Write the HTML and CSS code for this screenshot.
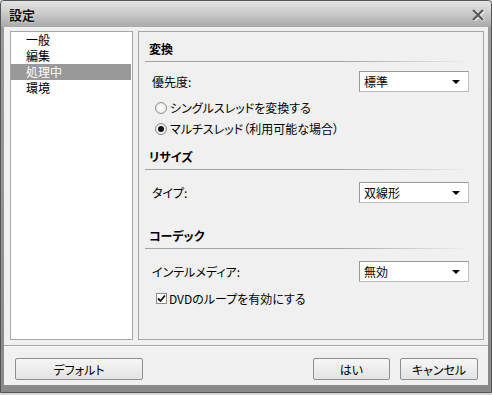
FILE: index.html
```html
<!DOCTYPE html>
<html lang="ja">

<head>
    <meta charset="UTF-8">
    <title>設定</title>
    <link rel="stylesheet" href="styles.css">
</head>

<body>
    <div class="window">
        <div class="titlebar">
            <span class="title">設定</span>
            <svg class="close" width="14" height="12" viewBox="0 0 14 12">
                <path d="M2 1 L12 11 M12 1 L2 11" stroke="#f4f4f4" stroke-width="3.4" transform="translate(0.6,0.6)" />
                <path d="M2 1 L12 11 M12 1 L2 11" stroke="#5c5c5c" stroke-width="2.4" />
            </svg>
        </div>

        <div class="client">
            <div class="main">
                <ul class="nav">
                    <li>一般</li>
                    <li>編集</li>
                    <li class="active">処理中</li>
                    <li>環境</li>
                </ul>

                <div class="panel">
                    <div class="section-head first">変換</div>
                    <div class="row field">
                        <span class="label">優先度:</span>
                        <div class="select"><span>標準</span><i class="arrow"></i></div>
                    </div>
                    <label class="row option first-option">
                        <span class="radio"></span>シングルスレッドを変換する
                    </label>
                    <label class="row option">
                        <span class="radio checked"></span>マルチスレッド（利用可能な場合）
                    </label>

                    <div class="section-head resize">リサイズ</div>
                    <div class="row field after-head">
                        <span class="label">タイプ:</span>
                        <div class="select"><span>双線形</span><i class="arrow"></i></div>
                    </div>

                    <div class="section-head codec">コーデック</div>
                    <div class="row field after-head">
                        <span class="label">インテルメディア:</span>
                        <div class="select"><span>無効</span><i class="arrow"></i></div>
                    </div>
                    <label class="row option check-row">
                        <span class="checkbox">
                            <svg width="9" height="9" viewBox="0 0 9 9">
                                <path d="M1 4.5 L3.5 7 L8 1.5" fill="none" stroke="#111" stroke-width="1.8" />
                            </svg>
                        </span>DVDのループを有効にする
                    </label>
                </div>
            </div>

            <div class="separator"></div>

            <div class="footer">
                <button class="btn default">デフォルト</button>
                <div class="spacer"></div>
                <button class="btn ok">はい</button>
                <button class="btn cancel">キャンセル</button>
            </div>
        </div>
    </div>
</body>

</html>
```

FILE: styles.css
```css
html {
    background-color: #d6d6d6;
}

body {
    margin: 0;
    font-family: "Noto Sans CJK JP", "Liberation Sans", sans-serif;
    font-size: 12px;
    font-feature-settings: "palt";
    color: #000;
}

.window {
    width: 492px;
    height: 393px;
    box-sizing: border-box;
    border: 1px solid #555;
    border-radius: 4px 4px 0 0;
    background: linear-gradient(#9d9d9d, #8a8a8a);
    display: flex;
    flex-direction: column;
}

.titlebar {
    height: 26px;
    flex: none;
    display: flex;
    align-items: center;
    justify-content: space-between;
    padding: 0 6px 0 8px;
    background: linear-gradient(#e4e4e4 0%, #cfcfcf 40%, #a9a9a9 100%);
    border-radius: 3px 3px 0 0;
}

.title {
    font-weight: bold;
    font-size: 13px;
    color: #111;
    text-shadow: 0 0 2px #fff;
}

.close {
    margin-top: 1px;
}

.client {
    flex: 1;
    margin: 0 3px 7px 3px;
    background-color: #f0f0f0;
    padding: 4px 4px 0 6px;
    display: flex;
    flex-direction: column;
}

.main {
    height: 309px;
    display: flex;
    gap: 5px;
}

.nav {
    width: 123px;
    box-sizing: border-box;
    margin: 0;
    padding: 0;
    list-style: none;
    background-color: #fff;
    border: 1px solid #a7a7a7;
}

.nav li {
    height: 16px;
    line-height: 16px;
    padding-left: 15px;
    margin-right: 1px;
}

.nav li.active {
    background-color: #999;
    color: #fff;
}

.panel {
    flex: 1;
    box-sizing: border-box;
    border: 1px solid #a7a7a7;
    padding: 0 14px 0 6px;
    display: flex;
    flex-direction: column;
}

.section-head {
    height: 16px;
    line-height: 16px;
    padding: 0 0 4px 4px;
    font-weight: bold;
    border-bottom: 1px solid transparent;
    border-image: linear-gradient(to right, #a4a4a4 60%, #f0f0f0) 1;
}

.section-head.first {
    margin-top: 9px;
}

.section-head.resize {
    margin-top: 10px;
}

.section-head.codec {
    margin-top: 25px;
}

.row {
    display: flex;
    align-items: center;
}

.field {
    height: 21px;
    justify-content: space-between;
    margin-top: 9px;
    padding-left: 7px;
}

.field.after-head {
    margin-top: 12px;
}

.select {
    width: 110px;
    height: 21px;
    box-sizing: border-box;
    background-color: #fff;
    border: 1px solid #bdbdbd;
    border-top-color: #9a9a9a;
    border-left-color: #9a9a9a;
    display: flex;
    align-items: center;
    justify-content: space-between;
    padding: 0 8px 0 4px;
}

.arrow {
    width: 0;
    height: 0;
    border-left: 4px solid transparent;
    border-right: 4px solid transparent;
    border-top: 4px solid #000;
    margin-top: 1px;
}

.option {
    height: 21px;
    padding-left: 10px;
    gap: 3px;
}

.first-option {
    margin-top: 5px;
}

.radio {
    width: 12px;
    height: 12px;
    box-sizing: border-box;
    border: 1px solid #8d8d8d;
    border-radius: 50%;
    background: radial-gradient(#fff, #e2e2e2);
    display: flex;
    align-items: center;
    justify-content: center;
}

.radio.checked::after {
    content: "";
    width: 6px;
    height: 6px;
    border-radius: 50%;
    background-color: #111;
}

.check-row {
    margin-top: 6px;
    padding-left: 11px;
    gap: 2px;
}

.checkbox {
    width: 11px;
    height: 11px;
    box-sizing: border-box;
    border: 1px solid #8d8d8d;
    background-color: #fff;
    display: flex;
    align-items: center;
    justify-content: center;
}

.separator {
    margin-top: 5px;
    margin-left: -6px;
    margin-right: -4px;
    border-top: 1px solid #a4a4a4;
    border-bottom: 1px solid #fff;
}

.footer {
    display: flex;
    gap: 10px;
    padding: 11px 6px 0 5px;
}

.spacer {
    flex: 1;
}

.btn {
    height: 22px;
    box-sizing: border-box;
    font-family: inherit;
    font-size: 12px;
    font-feature-settings: "palt";
    color: #000;
    background: linear-gradient(#f6f6f6, #e3e3e3);
    border: 1px solid #8e8e8e;
    border-radius: 2px;
    padding: 0;
}

.btn.default {
    width: 128px;
}

.btn.ok {
    width: 77px;
}

.btn.cancel {
    width: 78px;
}
```
